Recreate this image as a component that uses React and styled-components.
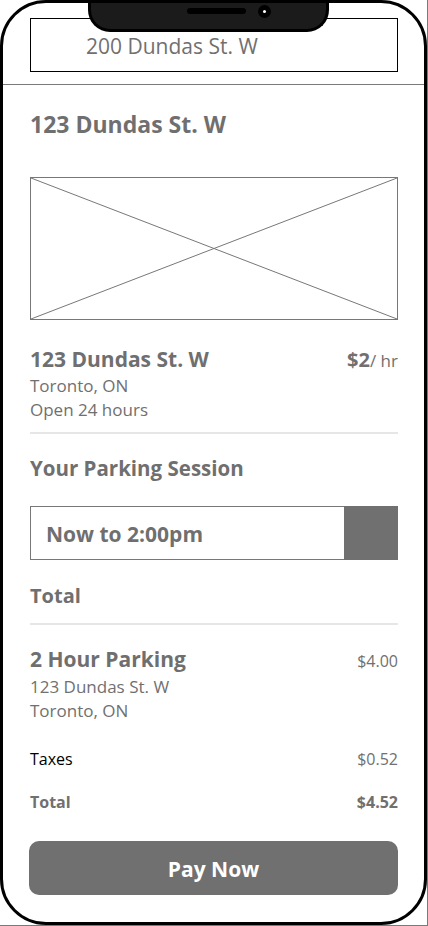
import React from "react";
import styled, { createGlobalStyle } from "styled-components";

const Global = createGlobalStyle`
  html, body { margin: 0; padding: 0; background: #fff; }
  body { font-family: "Open Sans", "Noto Sans", sans-serif; color: #707070; }
  * { box-sizing: border-box; }
`;

const Page = styled.div`
  width: 428px;
  height: 926px;
  border-right: 1px solid #7a7a7a;
  border-bottom: 1px solid #7a7a7a;
  background: #fff;
  overflow: hidden;
`;

const Phone = styled.div`
  position: relative;
  width: 427px;
  height: 925px;
  border: 3px solid #000;
  border-radius: 46px;
  overflow: hidden;
  display: flex;
  flex-direction: column;
`;

const Notch = styled.div`
  position: absolute;
  top: -3px;
  left: 85px;
  width: 241px;
  height: 32px;
  background: #1b1b1b;
  border: 3px solid #000;
  border-top: none;
  border-radius: 0 0 22px 22px;
  display: flex;
  align-items: center;
  justify-content: center;
  gap: 12px;
  padding-left: 40px;
  padding-bottom: 7px;
  z-index: 2;
`;

const Speaker = styled.div`
  width: 59px;
  height: 6px;
  border-radius: 3px;
  background: #000;
`;

const Camera = styled.div`
  width: 13px;
  height: 13px;
  border-radius: 50%;
  background: #000;
  display: flex;
  align-items: center;
  justify-content: center;
  &::after {
    content: "";
    width: 3px;
    height: 3px;
    border-radius: 50%;
    background: #fff;
  }
`;

const Header = styled.header`
  padding: 15px 26px 12px 27px;
  border-bottom: 1px solid #7a7a7a;
`;

const SearchBox = styled.div`
  height: 54px;
  border: 1px solid #000;
  display: flex;
  align-items: center;
  padding-left: 55px;
  padding-top: 2px;
  font-size: 21px;
  font-weight: 400;
  color: #707070;
`;

const Content = styled.main`
  padding: 0 26px 0 27px;
  display: flex;
  flex-direction: column;
`;

const Title = styled.h1`
  margin: ${(p) => p.$mt}px 0 0;
  font-size: ${(p) => p.$size}px;
  line-height: ${(p) => p.$lh}px;
  font-weight: 700;
  color: #6f6f6f;
`;

const Placeholder = styled.div`
  margin-top: 38px;
  height: 143px;
  border: 1px solid #777;
  svg { display: block; width: 100%; height: 100%; }
`;

const Row = styled.div`
  margin-top: ${(p) => p.$mt}px;
  display: flex;
  justify-content: space-between;
  align-items: baseline;
`;

const Name = styled.div`
  font-size: ${(p) => p.$size || 21}px;
  line-height: ${(p) => p.$lh || 26}px;
  font-weight: 700;
  color: #6f6f6f;
`;

const Price = styled.div`
  font-size: ${(p) => p.$size || 16}px;
  line-height: 22px;
  font-weight: ${(p) => (p.$bold ? 700 : 400)};
  color: #707070;
`;

const Unit = styled.span`
  font-size: 17px;
  font-weight: 400;
`;

const Sub = styled.div`
  margin-top: ${(p) => p.$mt || 0}px;
  font-size: 17px;
  line-height: ${(p) => p.$lh || 24}px;
  color: #707070;
`;

const Divider = styled.hr`
  margin: ${(p) => p.$mt}px 0 0;
  border: none;
  height: 2px;
  background: #e6e6e6;
`;

const TimeBox = styled.div`
  margin-top: 25px;
  height: 54px;
  border: 1px solid #777;
  display: flex;
  align-items: stretch;
`;

const TimeText = styled.div`
  flex: 1;
  display: flex;
  align-items: center;
  padding-left: 15px;
  padding-top: 2px;
  font-size: 21px;
  font-weight: 700;
  color: #6f6f6f;
`;

const TimeHandle = styled.div`
  width: 54px;
  margin: -1px -1px -1px 0;
  background: #707070;
`;

const LineLabel = styled.div`
  font-size: 16px;
  line-height: 22px;
  font-weight: ${(p) => (p.$bold ? 700 : 400)};
  color: ${(p) => (p.$dark ? "#000" : "#707070")};
`;

const PayButton = styled.button`
  margin-top: 28px;
  margin-left: -1px;
  height: 54px;
  border: none;
  border-radius: 10px;
  background: #707070;
  color: #fff;
  font-family: inherit;
  font-size: 21px;
  font-weight: 700;
  padding-top: 2px;
  cursor: pointer;
`;

export default function App() {
  return (
    <>
      <Global />
      <Page>
        <Phone>
          <Notch>
            <Speaker />
            <Camera />
          </Notch>
          <Header>
            <SearchBox>200 Dundas St. W</SearchBox>
          </Header>
          <Content>
            <Title $mt={24} $size={23} $lh={30}>123 Dundas St. W</Title>
            <Placeholder>
              <svg viewBox="0 0 366 141" preserveAspectRatio="none">
                <line x1="0" y1="0" x2="366" y2="141" stroke="#777" strokeWidth="1" vectorEffect="non-scaling-stroke" />
                <line x1="366" y1="0" x2="0" y2="141" stroke="#777" strokeWidth="1" vectorEffect="non-scaling-stroke" />
              </svg>
            </Placeholder>
            <Row $mt={26}>
              <Name>123 Dundas St. W</Name>
              <Price $size={20} $bold>$2<Unit>/ hr</Unit></Price>
            </Row>
            <Sub $mt={2}>Toronto, ON</Sub>
            <Sub>Open 24 hours</Sub>
            <Divider $mt={10} />
            <Title $mt={21} $size={20.5} $lh={26}>Your Parking Session</Title>
            <TimeBox>
              <TimeText>Now to 2:00pm</TimeText>
              <TimeHandle />
            </TimeBox>
            <Title $mt={23} $size={20} $lh={26}>Total</Title>
            <Divider $mt={14} />
            <Row $mt={21}>
              <Name>2 Hour Parking</Name>
              <Price>$4.00</Price>
            </Row>
            <Sub $mt={3} $lh={23.5}>123 Dundas St. W</Sub>
            <Sub $lh={23.5}>Toronto, ON</Sub>
            <Row $mt={26}>
              <LineLabel $dark>Taxes</LineLabel>
              <Price>$0.52</Price>
            </Row>
            <Row $mt={21}>
              <LineLabel $bold>Total</LineLabel>
              <Price $bold>$4.52</Price>
            </Row>
            <PayButton>Pay Now</PayButton>
          </Content>
        </Phone>
      </Page>
    </>
  );
}
